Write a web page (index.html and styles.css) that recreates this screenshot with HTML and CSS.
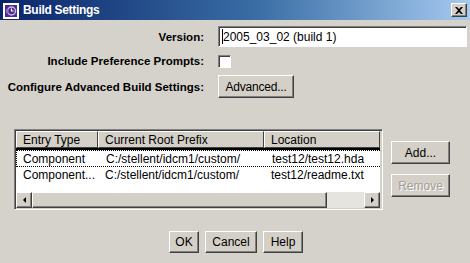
FILE: index.html
```html
<!DOCTYPE html>
<html lang="en">
<head>
    <meta charset="UTF-8">
    <title>Build Settings</title>
    <link rel="stylesheet" href="styles.css">
</head>
<body>
    <div class="window">
        <div class="titlebar">
            <svg class="appicon" width="16" height="16" viewBox="0 0 16 16">
                <rect x="0" y="0" width="16" height="16" fill="#fff"/>
                <rect x="2" y="2" width="12" height="12" fill="#4b2d87"/>
                <circle cx="8.5" cy="8" r="4" fill="none" stroke="#c9b8ef" stroke-width="1.4"/>
                <path d="M8.5 5.5 V8 H10.5" fill="none" stroke="#fff" stroke-width="1.2"/>
                <rect x="3" y="6" width="2" height="4" fill="#8a6fd0"/>
            </svg>
            <span class="title">Build Settings</span>
            <button class="closebtn" type="button">
                <svg width="8" height="7" viewBox="0 0 8 7">
                    <path d="M0 0 L2 0 L4 2 L6 0 L8 0 L5 3.5 L8 7 L6 7 L4 5 L2 7 L0 7 L3 3.5 Z" fill="#000"/>
                </svg>
            </button>
        </div>

        <div class="form">
            <label class="lbl">Version:</label>
            <div class="field"><span class="caret"></span>2005_03_02 (build 1)</div>

            <label class="lbl">Include Preference Prompts:</label>
            <div class="cell"><span class="check"></span></div>

            <label class="lbl">Configure Advanced Build Settings:</label>
            <div class="cell"><button class="btn btn-adv" type="button">Advanced...</button></div>
        </div>

        <div class="entries">
            <div class="table">
                <div class="thead">
                    <div class="th c1">Entry Type</div>
                    <div class="th c2">Current Root Prefix</div>
                    <div class="th c3">Location</div>
                </div>
                <div class="tbody">
                    <div class="tr focus">
                        <div class="td c1">Component</div>
                        <div class="td c2">C:/stellent/idcm1/custom/</div>
                        <div class="td c3">test12/test12.hda</div>
                    </div>
                    <div class="tr">
                        <div class="td c1">Component...</div>
                        <div class="td c2">C:/stellent/idcm1/custom/</div>
                        <div class="td c3">test12/readme.txt</div>
                    </div>
                </div>
                <div class="hscroll">
                    <div class="arrow"><span class="tri tri-left"></span></div>
                    <div class="thumb"></div>
                    <div class="track"></div>
                    <div class="arrow"><span class="tri tri-right"></span></div>
                </div>
            </div>
            <div class="side">
                <button class="btn btn-side" type="button">Add...</button>
                <button class="btn btn-side disabled" type="button">Remove</button>
            </div>
        </div>

        <div class="footer">
            <button class="btn btn-ok" type="button">OK</button>
            <button class="btn btn-cancel" type="button">Cancel</button>
            <button class="btn btn-help" type="button">Help</button>
        </div>
    </div>
</body>
</html>
```

FILE: styles.css
```css
* {
    margin: 0;
    padding: 0;
    box-sizing: border-box;
}

body {
    width: 470px;
    height: 263px;
    overflow: hidden;
    background-color: #d5d2cc;
    font-family: 'Liberation Sans', Arial, sans-serif;
    font-size: 12px;
    color: #000;
}

.window {
    width: 470px;
    height: 263px;
    display: flex;
    flex-direction: column;
}

/* title bar */
.titlebar {
    height: 21px;
    display: flex;
    align-items: center;
    padding: 0 3px 0 3px;
    background: linear-gradient(to right, #0a246a 0%, #3a6ea5 55%, #a6caf0 100%);
    border-bottom: 1px solid #d5d2cc;
}

.appicon {
    flex: none;
    margin-top: 1px;
}

.title {
    margin-left: 4px;
    color: #fff;
    font-weight: bold;
    font-size: 12px;
    letter-spacing: -0.3px;
    flex: 1;
}

.closebtn {
    width: 16px;
    height: 14px;
    display: flex;
    align-items: center;
    justify-content: center;
    background-color: #d4d0c8;
    border: 1px solid;
    border-color: #fff #404040 #404040 #fff;
    box-shadow: inset -1px -1px #808080;
}

/* top form */
.form {
    display: grid;
    grid-template-columns: 204px 1fr;
    grid-template-rows: 21px 20px 23px;
    column-gap: 14px;
    row-gap: 4px;
    margin-top: 5px;
    padding-right: 3px;
}

.lbl {
    font-weight: bold;
    font-size: 11.5px;
    text-align: right;
    align-self: center;
    white-space: nowrap;
}

.cell {
    display: flex;
    align-items: center;
}

.field {
    display: flex;
    align-items: center;
    background-color: #fff;
    border: 1px solid;
    border-color: #808080 #fff #fff #808080;
    box-shadow: inset 1px 1px #404040;
    padding-left: 3px;
    font-size: 12px;
}

.caret {
    width: 1px;
    height: 15px;
    background-color: #000;
}

.check {
    display: block;
    width: 13px;
    height: 13px;
    background-color: #fff;
    border: 1px solid;
    border-color: #808080 #fff #fff #808080;
    box-shadow: inset 1px 1px #404040;
}

/* buttons */
.btn {
    font-family: 'Liberation Sans', Arial, sans-serif;
    font-size: 12px;
    color: #000;
    background-color: #d4d0c8;
    border: 1px solid;
    border-color: #fff #404040 #404040 #fff;
    box-shadow: inset -1px -1px #808080;
}

.btn-adv {
    width: 76px;
    height: 23px;
    letter-spacing: -0.2px;
}

.btn.disabled {
    color: #a19e98;
    text-shadow: 1px 1px #fff;
}

/* entries table */
.entries {
    display: flex;
    gap: 8px;
    margin-top: 31px;
    padding-left: 14px;
}

.table {
    width: 369px;
    height: 81px;
    display: flex;
    flex-direction: column;
    border: 1px solid;
    border-color: #808080 #fff #fff #808080;
    box-shadow: inset 1px 1px #404040, inset -1px -1px #d4d0c8;
    padding: 1px 2px 1px 1px;
}

.thead {
    display: flex;
    height: 19px;
    border-bottom: 2px solid #000;
}

.th {
    display: flex;
    align-items: center;
    padding-left: 6px;
    background-color: #d4d0c8;
    border: 1px solid;
    border-color: #fff #404040 #404040 #fff;
    white-space: nowrap;
}

.c1 { width: 82px; }
.c2 { width: 166px; }
.c3 { flex: 1; }

.tbody {
    flex: 1;
    background-color: #fff;
    display: flex;
    flex-direction: column;
}

.tr {
    display: flex;
    height: 16px;
    align-items: center;
}

.tr.focus {
    border: 1px dotted #000;
    border-right: none;
    height: 17px;
}

.td {
    padding-left: 7px;
    white-space: nowrap;
}

.tr.focus .c1 {
    padding-left: 6px;
}

.hscroll {
    display: flex;
    height: 16px;
}

.arrow {
    width: 16px;
    height: 16px;
    display: flex;
    align-items: center;
    justify-content: center;
    background-color: #d4d0c8;
    border: 1px solid;
    border-color: #fff #404040 #404040 #fff;
    box-shadow: inset -1px -1px #808080;
}

.thumb {
    width: 295px;
    background-color: #d4d0c8;
    border: 1px solid;
    border-color: #fff #404040 #404040 #fff;
    box-shadow: inset -1px -1px #808080;
}

.track {
    flex: 1;
    background-color: #e6e4df;
}

.tri {
    width: 0;
    height: 0;
    border-top: 3px solid transparent;
    border-bottom: 3px solid transparent;
}

.tri-left {
    border-right: 3px solid #000;
}

.tri-right {
    border-left: 3px solid #000;
}

.side {
    display: flex;
    flex-direction: column;
    gap: 10px;
    padding-top: 12px;
}

.btn-side {
    width: 59px;
    height: 23px;
}

/* bottom */
.footer {
    display: flex;
    justify-content: center;
    gap: 6px;
    margin-top: 21px;
    padding-left: 2px;
}

.btn-ok { width: 30px; height: 22px; }
.btn-cancel { width: 52px; height: 22px; }
.btn-help { width: 40px; height: 22px; }
```
